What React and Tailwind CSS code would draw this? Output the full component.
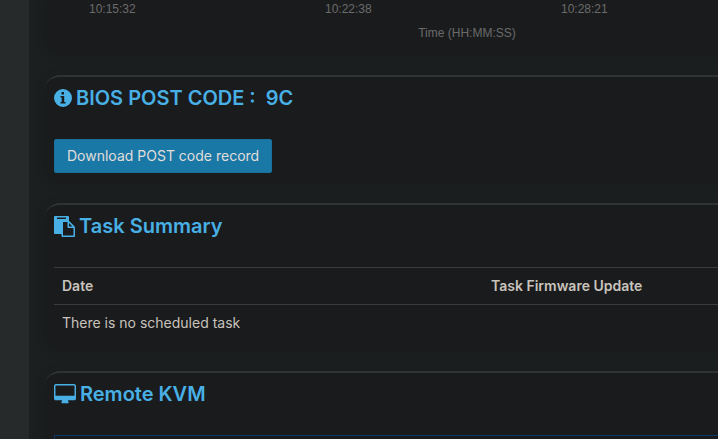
const ticks = ['10:15:32', '10:22:38', '10:28:21'];

function InfoIcon() {
    return (
        <svg className="size-[18px] shrink-0" viewBox="0 0 18 18" fill="currentColor" fillRule="evenodd" aria-hidden="true">
            <path d="M9 0a9 9 0 1 0 0 18 9 9 0 0 0 0-18zM7.500 3h2.500v2.500h-2.500zM6.500 7h3.700v6h1.300v1.500h-5v-1.500h1.200v-4.500h-1.200z" />
        </svg>
    );
}

function PasteIcon() {
    return (
        <svg className="size-[21px] shrink-0" viewBox="0 0 1792 1792" fill="currentColor" aria-hidden="true">
            <path d="M768 1664h896v-640h-416q-40 0-68-28t-28-68v-416h-384v1152zm256-1440v-64q0-13-9.500-22.500t-22.500-9.500h-704q-13 0-22.500 9.500t-9.500 22.500v64q0 13 9.500 22.500t22.500 9.500h704q13 0 22.500-9.500t9.500-22.500zm256 672h299l-299-299v299zm512 128v672q0 40-28 68t-68 28h-960q-40 0-68-28t-28-68v-160h-544q-40 0-68-28t-28-68v-1344q0-40 28-68t68-28h1088q40 0 68 28t28 68v328q21 13 36 28l408 408q28 28 48 76t20 88z" />
        </svg>
    );
}

function DesktopIcon() {
    return (
        <svg className="h-5 w-[22px] shrink-0" viewBox="0 0 1920 1728" fill="currentColor" aria-hidden="true">
            <path d="M1792 992v-832q0-13-9.500-22.500t-22.500-9.500h-1600q-13 0-22.500 9.500t-9.500 22.500v832q0 13 9.500 22.500t22.500 9.500h1600q13 0 22.500-9.500t9.500-22.500zm128-832v1088q0 66-47 113t-113 47h-544q0 37 16 77.500t32 71 16 43.500q0 26-19 45t-45 19h-512q-26 0-45-19t-19-45q0-14 16-44t32-70 16-78h-544q-66 0-113-47t-47-113v-1088q0-66 47-113t113-47h1600q66 0 113 47t47 113z" />
        </svg>
    );
}

function Panel({ icon, title, children }) {
    return (
        <section className="rounded-l-2xl border-t-2 border-[#303335] bg-[#1a1b1d] pt-[6px] pb-[10px] pl-[10px] shadow-[0_0_12px_rgba(0,0,0,0.1)]">
            <h2 className="mb-[26px] flex h-[30px] items-center gap-1 text-xl leading-6 font-semibold whitespace-pre text-[#48b0e5]">
                {icon}
                {title}
            </h2>
            {children}
        </section>
    );
}

export default function App() {
    return (
        <div className="flex h-screen overflow-hidden bg-[#1b1f20] font-['Inter',sans-serif] text-sm text-[#c8c3bc]">
            <aside className="w-[29px] shrink-0 bg-[#262a2b]" />

            <main className="flex min-w-0 flex-1 flex-col gap-5 pl-[15px]">
                <section className="shrink-0 overflow-hidden rounded-bl-2xl bg-[#1a1b1d] pt-px pb-[14px] font-['Liberation_Sans',sans-serif] text-xs text-[#6b6b6b] shadow-[0_0_12px_rgba(0,0,0,0.1)]">
                    <div className="flex pl-[45px]">
                        {ticks.map((tick) => (
                            <span key={tick} className="w-[236px] shrink-0">{tick}</span>
                        ))}
                    </div>
                    <p className="mt-2 pl-[172px] text-center">Time (HH:MM:SS)</p>
                </section>

                <Panel icon={<InfoIcon />} title="BIOS POST CODE :  9C">
                    <button
                        type="button"
                        className="block h-[34px] rounded-xs border border-[#1a6f9c] bg-[#1978a5] px-3 text-sm text-[#e0dedb]"
                    >
                        Download POST code record
                    </button>
                </Panel>

                <Panel icon={<PasteIcon />} title="Task Summary">
                    <table className="w-full table-fixed border-t border-[#3b3e40] text-left">
                        <thead>
                            <tr className="h-[37px] border-b border-[#3b3e40]">
                                <th className="w-[429px] px-2 font-semibold">Date</th>
                                <th className="px-2 font-semibold">Task Firmware Update</th>
                            </tr>
                        </thead>
                        <tbody>
                            <tr className="h-[36px]">
                                <td className="px-2" colSpan={2}>There is no scheduled task</td>
                            </tr>
                        </tbody>
                    </table>
                </Panel>

                <Panel icon={<DesktopIcon />} title="Remote KVM">
                    <div className="h-40 border border-r-0 border-[#0b3a68]" />
                </Panel>
            </main>
        </div>
    );
}
